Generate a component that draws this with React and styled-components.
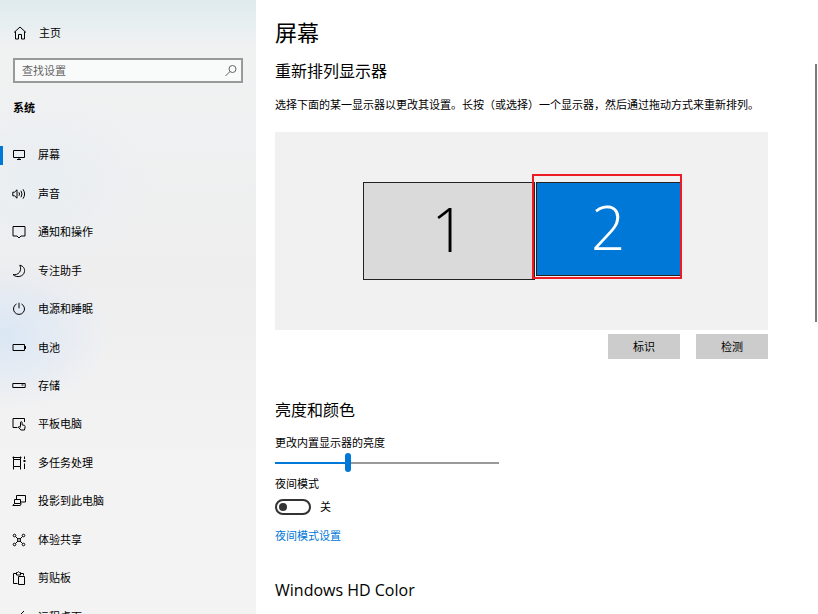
import React, { useState } from "react";
import styled, { createGlobalStyle } from "styled-components";

const GlobalStyle = createGlobalStyle`
  * {
    box-sizing: border-box;
  }
  body {
    margin: 0;
    overflow: hidden;
    background: #fff;
    color: #000;
    font-family: "Open Sans", "Noto Sans CJK SC", sans-serif;
    font-size: 11px;
    line-height: 16px;
  }
  input, button {
    font: inherit;
    color: inherit;
  }
`;

const Page = styled.div`
  display: flex;
  height: 100vh;
  overflow: hidden;
`;

const Sidebar = styled.aside`
  width: 256px;
  flex-shrink: 0;
  overflow: hidden;
  background:
    radial-gradient(ellipse 110px 75px at 0 335px, rgba(216, 230, 246, 0.9), transparent),
    radial-gradient(ellipse 110px 90px at 40px 180px, rgba(232, 238, 243, 0.9), transparent),
    linear-gradient(to bottom, #dfebee 0, rgba(240, 242, 243, 0) 50px),
    linear-gradient(to bottom, #f1f3f3 0, #eeeeef 45%, #f3f3f3 75%);
`;

const HomeLink = styled.a`
  display: flex;
  align-items: center;
  gap: 12px;
  padding: 25px 13px 17px;
  color: inherit;
  text-decoration: none;
`;

const SearchBox = styled.label`
  display: flex;
  align-items: center;
  height: 25px;
  margin: 0 13px;
  padding: 0 3px 0 7px;
  border: 2px solid #999;
  background: rgba(255, 255, 255, 0.6);
  color: #666;
  input {
    flex: 1;
    min-width: 0;
    height: 16px;
    padding: 0;
    border: 0;
    outline: 0;
    background: none;
    &::placeholder {
      color: #666;
      opacity: 1;
    }
  }
`;

const GroupName = styled.h2`
  margin: 17px 13px 20px;
  font-size: 11px;
  font-weight: 700;
  line-height: 16px;
`;

const Nav = styled.nav`
  display: grid;
  grid-auto-rows: 1fr;
  min-height: 500px;
`;

const NavItem = styled.a`
  display: flex;
  align-items: center;
  gap: 12px;
  padding-right: 12px;
  color: inherit;
  text-decoration: none;
  &::before {
    content: "";
    width: 3px;
    height: 19px;
    margin-right: -3px;
    background: ${({ $active }) => ($active ? "#0078d7" : "transparent")};
  }
`;

const Svg = styled.svg`
  width: 14px;
  height: 14px;
  flex-shrink: 0;
  fill: none;
  stroke: currentColor;
`;

const Icon = ({ children }) => (
  <Svg viewBox="0 0 14 14" aria-hidden="true">
    {children}
  </Svg>
);

const Main = styled.main`
  flex: 1;
  min-width: 0;
  padding: 16px 3px 0 19px;
  overflow: hidden;
`;

const Title = styled.h1`
  margin: 0 0 11px;
  font-size: 22px;
  font-weight: 400;
  line-height: 32px;
`;

const Heading = styled.h2`
  margin: 0;
  font-size: 16px;
  font-weight: 400;
  line-height: 24px;
`;

const Section = styled.section`
  margin: 0 44px 34px 0;
`;

const Hint = styled.p`
  margin: 14px 0 19px;
  white-space: nowrap;
`;

const Arrangement = styled.div`
  display: flex;
  justify-content: center;
  align-items: flex-start;
  gap: 1px;
  height: 198px;
  padding-top: 50px;
  background: #f1f1f1;
`;

const Display = styled.button`
  position: relative;
  width: ${({ $width }) => $width}px;
  height: ${({ $height }) => $height}px;
  padding: 0 0 4px;
  border: 1px solid #222;
  background: ${({ $selected }) => ($selected ? "#0078d7" : "#dadada")};
  color: ${({ $selected }) => ($selected ? "#fff" : "#000")};
  font-size: 60px;
  font-weight: 300;
  line-height: 60px;
`;

const Highlight = styled.span`
  position: absolute;
  inset: -9px -2px -4px -5px;
  border: 2px solid #ed1c24;
`;

const Actions = styled.div`
  display: flex;
  justify-content: flex-end;
  gap: 16px;
  padding: 4px 0 5px;
`;

const Button = styled.button`
  width: 72px;
  height: 25px;
  padding: 0;
  border: 0;
  background: #ccc;
`;

const Field = styled.div`
  display: flex;
  flex-direction: column;
  align-items: flex-start;
  margin-top: 13px;
`;

const Slider = styled.input`
  appearance: none;
  width: 224px;
  height: 19px;
  margin: 2px 0 4px;
  background: linear-gradient(to right, #0078d7 ${({ value }) => value}%, #999 0)
    center / 100% 2px no-repeat;
  &::-webkit-slider-thumb {
    appearance: none;
    width: 6px;
    height: 19px;
    border-radius: 3px;
    background: #0078d7;
  }
`;

const ToggleRow = styled.label`
  display: flex;
  align-items: center;
  gap: 9px;
  margin-top: 7px;
`;

const Toggle = styled.input`
  appearance: none;
  display: flex;
  align-items: center;
  justify-content: ${({ checked }) => (checked ? "flex-end" : "flex-start")};
  width: 36px;
  height: 16px;
  margin: 0;
  padding: 0 2px;
  border: 2px solid #333;
  border-radius: 8px;
  &::before {
    content: "";
    width: 8px;
    height: 8px;
    border-radius: 50%;
    background: #333;
  }
`;

const Link = styled.a`
  margin-top: 13px;
  color: #0078d7;
  text-decoration: none;
`;

const Scrollbar = styled.div`
  width: 3px;
  flex-shrink: 0;
  padding-top: 64px;
  &::before {
    content: "";
    display: block;
    width: 2px;
    height: 42vh;
    background: #7a7a7a;
  }
`;

const items = [
  { name: "屏幕", icon: <path d="M1.500 2.500h11v7h-11zM7 9.500v2M5 11.500h4" /> },
  {
    name: "声音",
    icon: (
      <path d="M.8 5.200h1.700l2.500-2.400v8.400L2.500 8.800H.8zM7 5.300q1 1.700 0 3.400M9 3.800q2 3.200 0 6.400M11 2.300q3.200 4.700 0 9.400" />
    ),
  },
  { name: "通知和操作", icon: <path d="M1 1.500h12v9.500H9l-2 2-2-2H1z" /> },
  {
    name: "专注助手",
    icon: <path d="M7.800 1.200C11.200 2 13 4.500 12.500 7.600c-.8 5-7.800 6.800-11.500 2.900C6 11.800 10.500 7 7.800 1.200z" />,
  },
  { name: "电源和睡眠", icon: <path d="M7 .8v5.500M4.500 2a5.500 5.500 0 1 0 5 0" /> },
  { name: "电池", icon: <path d="M1 3.500h11.500v6H1zM13.500 5v3" /> },
  { name: "存储", icon: <path d="M.8 4.500h12.400v4H.8zM9.500 6h2" /> },
  {
    name: "平板电脑",
    icon: (
      <path d="M5.500 10.500H1v-9h11.500v3.500M8.500 9.800V5.200q.8-1.200 1.600 0v2.600l2.400.6q.8.400.6 1.300l-.6 3.300H8.800L6.300 10q.8-1.200 2.200.3" />
    ),
  },
  {
    name: "多任务处理",
    icon: (
      <>
        <path d="M1.500 3.500h7v7h-7zM1.500 .5v3M8.500 .5v3M.5 1.500h9M1.500 10.500v3M8.500 10.500v3M12.500 .5v2.500M12.500 7.500v5.500" />
        <path d="M11.500 4h2v2h-2z" fill="currentColor" stroke="none" />
      </>
    ),
  },
  {
    name: "投影到此电脑",
    icon: <path d="M4.500 5V1.500h9v6.500H8.500M2.500 5.500h6v4h-6zM2.500 9.500l-1.700 2h7.500l1-2" />,
  },
  {
    name: "体验共享",
    icon: (
      <>
        <circle cx="2.500" cy="2.500" r="1.300" />
        <circle cx="11.500" cy="2.500" r="1.300" />
        <circle cx="2.500" cy="11.500" r="1.300" />
        <circle cx="11.500" cy="11.500" r="1.300" />
        <circle cx="7" cy="7" r="1.500" />
        <path d="M3.500 3.500l2.500 2.500M10.500 3.500L8 6M3.500 10.500L6 8M10.500 10.500L8 8" />
      </>
    ),
  },
  {
    name: "剪贴板",
    icon: (
      <path d="M5.500 12.500h-4v-10h3M8.500 2.500h3v2M4.500 4V1.500h1q1-1.600 2 0h1V4zM6.500 5.500h6v8h-6z" />
    ),
  },
  { name: "远程桌面", icon: <path d="M2 5l4 4-4 4M12 1L7.500 5.500 12 10" /> },
];

export default function App() {
  const [brightness, setBrightness] = useState(32);
  const [nightLight, setNightLight] = useState(false);

  return (
    <Page>
      <GlobalStyle />
      <Sidebar>
        <HomeLink href="#home">
          <Icon>
            <path d="M1 6.500L7 1l6 5.500M2.500 5.500v7.500h3V8.500h3V13h3V5.500" />
          </Icon>
          主页
        </HomeLink>
        <SearchBox>
          <input type="text" placeholder="查找设置" aria-label="查找设置" />
          <Icon>
            <circle cx="8.500" cy="5" r="3.500" />
            <path d="M6 7.500L1.500 12" />
          </Icon>
        </SearchBox>
        <GroupName>系统</GroupName>
        <Nav>
          {items.map(({ name, icon }, i) => (
            <NavItem key={name} href="#" $active={i === 0}>
              <Icon>{icon}</Icon>
              {name}
            </NavItem>
          ))}
        </Nav>
      </Sidebar>

      <Main>
        <Title>屏幕</Title>
        <Section>
          <Heading>重新排列显示器</Heading>
          <Hint>
            选择下面的某一显示器以更改其设置。长按（或选择）一个显示器，然后通过拖动方式来重新排列。
          </Hint>
          <Arrangement>
            <Display $width={172} $height={98}>
              1
            </Display>
            <Display $width={145} $height={94} $selected>
              2
              <Highlight />
            </Display>
          </Arrangement>
          <Actions>
            <Button>标识</Button>
            <Button>检测</Button>
          </Actions>
        </Section>

        <Section>
          <Heading>亮度和颜色</Heading>
          <Field>
            <label htmlFor="brightness">更改内置显示器的亮度</label>
            <Slider
              id="brightness"
              type="range"
              value={brightness}
              onChange={(e) => setBrightness(Number(e.target.value))}
            />
            <label htmlFor="night">夜间模式</label>
            <ToggleRow>
              <Toggle
                id="night"
                type="checkbox"
                checked={nightLight}
                onChange={(e) => setNightLight(e.target.checked)}
              />
              {nightLight ? "开" : "关"}
            </ToggleRow>
            <Link href="#night">夜间模式设置</Link>
          </Field>
        </Section>

        <Section>
          <Heading>Windows HD Color</Heading>
        </Section>
      </Main>
      <Scrollbar />
    </Page>
  );
}
